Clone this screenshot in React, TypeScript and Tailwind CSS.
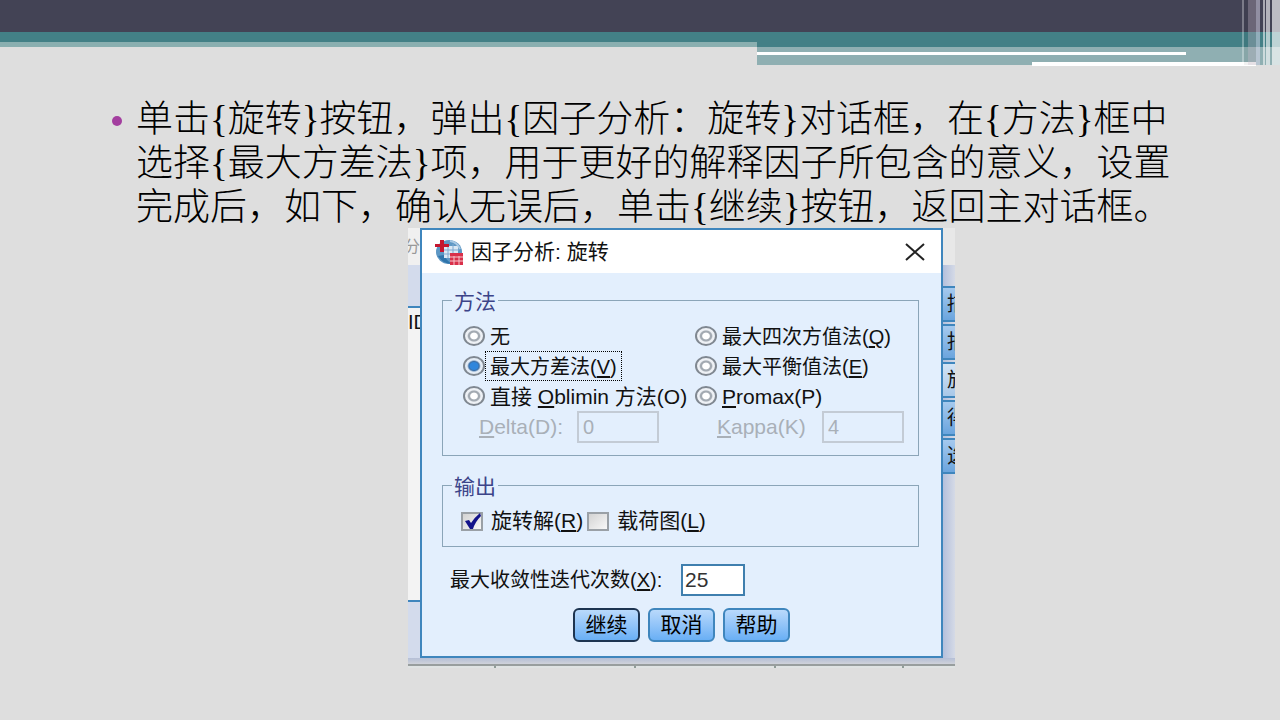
import type { ReactNode } from "react";

const BODY =
  "单击{旋转}按钮，弹出{因子分析：旋转}对话框，在{方法}框中选择{最大方差法}项，用于更好的解释因子所包含的意义，设置完成后，如下，确认无误后，单击{继续}按钮，返回主对话框。";

const STRIPES = [
  { id: "a", cls: "w-[2px] bg-white/30" },
  { id: "b", cls: "w-[4px] bg-black/5" },
  { id: "c", cls: "w-[8px] bg-[#b8a8b8]/35" },
  { id: "d", cls: "w-[4px] bg-[#e0dcf0]/50" },
  { id: "e", cls: "w-[3px]" },
  { id: "f", cls: "w-[2px] bg-white/55" },
  { id: "g", cls: "w-[1px]" },
  { id: "h", cls: "w-[4px] bg-white/60" },
  { id: "i", cls: "w-[2px]" },
  { id: "j", cls: "w-[8px] bg-white/65" },
];

const SIDE_BUTTONS = [
  { label: "描", tone: "from-[#a5c9ee] to-[#6ba5de]" },
  { label: "抽", tone: "from-[#a5c9ee] to-[#6ba5de]" },
  { label: "旋", tone: "from-[#d3e4f5] to-[#a9c8e8]" },
  { label: "得", tone: "from-[#a5c9ee] to-[#6ba5de]" },
  { label: "选", tone: "from-[#a5c9ee] to-[#6ba5de]" },
];

const RADIO =
  "h-5 w-[22px] shrink-0 appearance-none rounded-[50%] border-2 border-[#808891] bg-[radial-gradient(ellipse_at_center,#ffffff_0_26%,#a3aab2_34%_44%,#eef1f5_54%)] checked:bg-[radial-gradient(ellipse_at_center,#2f86dc_0_30%,#3b6fa8_40%,#e4ecf5_54%)]";

const CHECK =
  "col-start-1 row-start-1 h-[19px] w-[22px] appearance-none border-2 border-[#9aa0a6] bg-linear-to-br from-[#d3d3d3] to-[#f8f8f8]";

const LEGEND = "px-0.5 pt-1 text-[21px] leading-5 text-[#3c4489]";

const ACTION =
  "h-[34px] w-[67px] rounded-md border-2 bg-linear-to-b from-[#b9d9fb] to-[#69aff5] text-[21px] leading-7 text-black";

function Key({ children }: { children: ReactNode }) {
  return <span className="underline decoration-2 underline-offset-2">{children}</span>;
}

function Radio({
  id,
  checked,
  wide,
  children,
}: {
  id: string;
  checked?: boolean;
  wide?: boolean;
  children: ReactNode;
}) {
  return (
    <div className="flex h-[30px] items-center">
      <input type="radio" id={id} name="method" defaultChecked={checked} className={RADIO} />
      <label
        htmlFor={id}
        className={`border px-1 pt-0.5 leading-[26px] whitespace-nowrap ${wide ? "text-[21px]" : "text-xl"} ${
          checked ? "border-dotted border-black" : "border-transparent"
        }`}
      >
        {children}
      </label>
    </div>
  );
}

function Check({ id, checked, children }: { id: string; checked?: boolean; children: ReactNode }) {
  return (
    <div className="flex h-7 items-center gap-2">
      <span className="grid">
        <input type="checkbox" id={id} defaultChecked={checked} className={CHECK} />
        {checked && (
          <svg viewBox="0 0 22 19" className="pointer-events-none col-start-1 row-start-1 h-[19px] w-[22px]" aria-hidden>
            <path d="M4 9 L8 8 L10 11 Q13 6 19 1 L20 4 Q14 10 12 17 L9 17 Z" fill="#13138a" />
          </svg>
        )}
      </span>
      <label htmlFor={id} className="text-[21px] whitespace-nowrap">
        {children}
      </label>
    </div>
  );
}

function Logo() {
  return (
    <svg viewBox="0 0 28 26" className="h-[26px] w-7" aria-hidden>
      <ellipse cx="14" cy="13" rx="13" ry="12" fill="#5d97c4" />
      <path d="M3 17 Q8 25 17 25 Q11 21 9 16 Z" fill="#2e74ab" />
      <path d="M9 7 H23 V19 H9 Z" fill="#dbe8f4" />
      <path d="M9 11 H24 M9 15 H24 M13 7 V19 M18 5 V19" stroke="#7fa9d0" />
      <path d="M15 2 Q22 3 25 10" fill="none" stroke="#a9c9e4" strokeWidth="2" />
      <path d="M5 1 H9 V5 H14 V8 H9 V13 H5 V8 H0 V5 H5 Z" fill="#c4162f" />
      <path d="M15 14 H28 V26 H15 Z" fill="#d9304a" />
      <path d="M15 18 H28 M15 22 H28 M19 17 V26 M24 17 V26" stroke="#f6c4cc" />
    </svg>
  );
}

function SlideHeader() {
  return (
    <header className="relative" aria-hidden>
      <div className="h-8 bg-[#434355]" />
      <div className="h-[10px] bg-[#438086]" />
      <div className="flex items-start">
        <div className="h-[5px] flex-1 bg-[#8aafb0]" />
        <div className="w-[523px]">
          <div className="h-[5px] bg-[#438086]" />
          <div className="h-[18px] bg-[#8fafb2] pt-[5px]">
            <div className="h-[3px] w-[429px] bg-white" />
            <div className="mt-[7px] ml-[275px] h-1 w-[224px] bg-white" />
          </div>
        </div>
      </div>
      <div className="absolute inset-y-0 right-0 flex">
        {STRIPES.map((s) => (
          <div key={s.id} className={s.cls} />
        ))}
      </div>
    </header>
  );
}

function RotationDialog() {
  return (
    <section className="flex-1 border-2 border-[#3f86bd] bg-[#e3effd]">
      <div className="flex h-[43px] items-center bg-white pr-4 pl-[13px]">
        <Logo />
        <h2 className="ml-2 flex-1 text-[21px]">因子分析: 旋转</h2>
        <button type="button" aria-label="关闭">
          <svg viewBox="0 0 20 18" className="h-[18px] w-5" aria-hidden>
            <path d="M1 1 L19 17 M19 1 L1 17" stroke="#222" strokeWidth="2" />
          </svg>
        </button>
      </div>

      <form className="px-5 pt-[15px] pb-[14px]">
        <fieldset className="mr-0.5 border border-[#8ba5b8] pt-[9px] pb-3 pl-5">
          <legend className={`-ml-[11px] ${LEGEND}`}>方法</legend>
          <div className="grid grid-cols-[232px_1fr]">
            <Radio id="none">无</Radio>
            <Radio id="quartimax">
              最大四次方值法(<Key>Q</Key>)
            </Radio>
            <Radio id="varimax" checked>
              最大方差法(<Key>V</Key>)
            </Radio>
            <Radio id="equamax">
              最大平衡值法(<Key>E</Key>)
            </Radio>
            <Radio id="oblimin" wide>
              直接 <Key>O</Key>blimin 方法(O)
            </Radio>
            <Radio id="promax" wide>
              <Key>P</Key>romax(P)
            </Radio>
            <div className="flex items-center pl-4 text-[#a9b0b8]">
              <label htmlFor="delta" className="w-[98px] text-[21px]">
                <Key>D</Key>elta(D):
              </label>
              <input id="delta" disabled defaultValue="0" className="h-8 w-[82px] border-2 border-[#c3cbd5] px-1" />
            </div>
            <div className="flex items-center pl-[22px] text-[#a9b0b8]">
              <label htmlFor="kappa" className="w-[105px] text-[21px]">
                <Key>K</Key>appa(K)
              </label>
              <input id="kappa" disabled defaultValue="4" className="h-8 w-[82px] border-2 border-[#c3cbd5] px-1" />
            </div>
          </div>
        </fieldset>

        <fieldset className="mt-[17px] mr-0.5 border border-[#8ba5b8] pt-[10px] pb-[11px] pl-[18px]">
          <legend className={`-ml-[9px] ${LEGEND}`}>输出</legend>
          <div className="flex gap-1">
            <Check id="solution" checked>
              旋转解(<Key>R</Key>)
            </Check>
            <Check id="loading">
              载荷图(<Key>L</Key>)
            </Check>
          </div>
        </fieldset>

        <div className="mt-[17px] flex items-center pl-2">
          <label htmlFor="iterations" className="w-[231px]">
            最大收敛性迭代次数(<Key>X</Key>):
          </label>
          <input
            id="iterations"
            defaultValue="25"
            className="h-8 w-16 border-2 border-[#3f7fae] bg-white px-0.5 text-[21px] text-[#333]"
          />
        </div>

        <div className="mt-3 flex gap-2 pl-[131px]">
          <button type="button" className={`${ACTION} border-[#1d3450]`}>
            继续
          </button>
          <button type="button" className={`${ACTION} border-[#3f86bd]`}>
            取消
          </button>
          <button type="button" className={`${ACTION} border-[#3f86bd]`}>
            帮助
          </button>
        </div>
      </form>
    </section>
  );
}

export default function App() {
  return (
    <div className="min-h-screen bg-[#dedede]">
      <SlideHeader />

      <main className="pt-[33px] pr-[90px] pl-28">
        <ul>
          <li className="flex items-start gap-[14px]">
            <span className="mt-[18px] size-[10px] shrink-0 rounded-full bg-[#a33e9f]" />
            <p className="font-['Liberation_Serif','Noto_Sans_CJK_SC',serif] text-[37px] leading-[44px] font-light text-black">
              {BODY}
            </p>
          </li>
        </ul>

        <div className="-mt-0.5 ml-[296px] w-[547px] overflow-hidden font-['Liberation_Sans','Noto_Sans_CJK_SC',sans-serif] text-xl text-[#111]">
          <div className="flex">
            {/* window behind, left edge */}
            <div className="flex w-3 flex-col overflow-hidden bg-[#d3dbec]">
              <div className="flex h-[37px] items-center justify-end bg-[#f0f0f0] text-base text-[#999]">
                <span>分</span>
              </div>
              <div className="mt-[41px] h-[296px] border-y-2 border-[#3f86bd] bg-[#f3f3f3] text-xl leading-7 whitespace-nowrap">
                ID
              </div>
            </div>

            <RotationDialog />

            {/* window behind, right edge */}
            <div className="flex w-3 flex-col overflow-hidden bg-linear-to-r from-[#b4c0dc] to-[#d5dae6]">
              <div className="mb-[21px] h-[37px] shrink-0 bg-[#e8e8e8]" />
              {SIDE_BUTTONS.map((b) => (
                <div
                  key={b.label}
                  className={`mb-0.5 h-9 w-10 shrink-0 border-y-2 border-[#3f86bd] bg-linear-to-b pl-1 leading-8 ${b.tone}`}
                >
                  {b.label}
                </div>
              ))}
            </div>
          </div>
          <div className="h-[6px] bg-linear-to-b from-[#b5bfd6] to-[#cfd2da]" />
          <div className="flex h-1 border-t-2 border-[#989e9e] bg-[#dfe3e3] pl-[86px]">
            <div className="w-[140px] border-l-2 border-[#8f9c98]" />
            <div className="w-[140px] border-l-2 border-[#8f9c98]" />
            <div className="w-[128px] border-l-2 border-[#8f9c98]" />
            <div className="flex-1 border-l-2 border-[#8f9c98]" />
          </div>
        </div>
      </main>
    </div>
  );
}
